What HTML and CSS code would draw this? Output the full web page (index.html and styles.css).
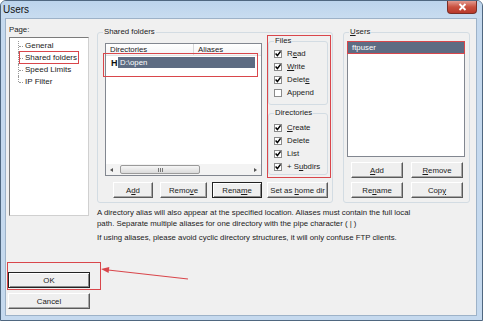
FILE: index.html
```html
<!DOCTYPE html>
<html lang="en">
<head>
    <meta charset="UTF-8">
    <title>Users</title>
    <link rel="stylesheet" href="styles.css">
</head>
<body>
    <div class="window">
        <div class="titlebar">
            <span class="title">Users</span>
            <span class="close">
                <svg width="9" height="8" viewBox="0 0 9 8"><path d="M1.5 1 L7.5 7 M7.5 1 L1.5 7" stroke="#fff" stroke-width="1.8" fill="none"/></svg>
            </span>
        </div>

        <div class="dialog">
            <!-- Page selector -->
            <div class="side">
                <div class="page-label">Page:</div>
                <ul class="tree">
                    <li>General</li>
                    <li><span class="mark">Shared folders</span></li>
                    <li>Speed Limits</li>
                    <li>IP Filter</li>
                </ul>
                <div class="side-buttons">
                    <button class="btn default">OK</button>
                    <button class="btn">Cancel</button>
                </div>
            </div>

            <div class="main">
                <div class="groups">
                    <!-- Shared folders -->
                    <div class="group shared">
                        <span class="group-title">Shared folders</span>
                        <div class="shared-body">
                            <div class="listview">
                                <div class="lv-head">
                                    <span class="col-dir">Directories</span>
                                    <span class="col-alias">Aliases</span>
                                </div>
                                <div class="lv-body">
                                    <div class="lv-row"><span class="home">H</span><span class="sel">D:\open</span></div>
                                </div>
                                <div class="hscroll">
                                    <span class="arrow left"></span>
                                    <span class="thumb"><span class="grip"></span></span>
                                    <span class="arrow right"></span>
                                </div>
                            </div>

                            <div class="perms">
                                <div class="group files">
                                    <span class="group-title">Files</span>
                                    <div class="check"><span class="box on"></span><span>R<u>e</u>ad</span></div>
                                    <div class="check"><span class="box on"></span><span><u>W</u>rite</span></div>
                                    <div class="check"><span class="box on"></span><span>Delet<u>e</u></span></div>
                                    <div class="check"><span class="box"></span><span>Append</span></div>
                                </div>
                                <div class="group dirs">
                                    <span class="group-title">Directories</span>
                                    <div class="check"><span class="box on"></span><span><u>C</u>reate</span></div>
                                    <div class="check"><span class="box on"></span><span>Delete</span></div>
                                    <div class="check"><span class="box on"></span><span>List</span></div>
                                    <div class="check"><span class="box on"></span><span>+ S<u>u</u>bdirs</span></div>
                                </div>
                            </div>

                            <div class="shared-buttons">
                                <button class="btn w-add">A<u>d</u>d</button>
                                <button class="btn w-remove">Remo<u>v</u>e</button>
                                <button class="btn default w-rename">Rena<u>m</u>e</button>
                                <button class="btn w-home">Set as <u>h</u>ome dir</button>
                            </div>
                        </div>
                    </div>

                    <!-- Users -->
                    <div class="group users">
                        <span class="group-title"><u>U</u>sers</span>
                        <div class="listbox">
                            <div class="listbox-row">ftpuser</div>
                        </div>
                        <div class="user-buttons">
                            <button class="btn"><u>A</u>dd</button>
                            <button class="btn"><u>R</u>emove</button>
                            <button class="btn">Re<u>n</u>ame</button>
                            <button class="btn">Cop<u>y</u></button>
                        </div>
                    </div>
                </div>

                <div class="notes">
                    <p>A directory alias will also appear at the specified location. Aliases must contain the full local<br>path. Separate multiple aliases for one directory with the pipe character ( | )</p>
                    <p>If using aliases, please avoid cyclic directory structures, it will only confuse FTP clients.</p>
                </div>
            </div>
        </div>

        <!-- annotations -->
        <div class="callout callout-row"></div>
        <div class="callout callout-ok"></div>
        <svg class="arrow-svg" width="100" height="30" viewBox="0 0 100 30">
            <line x1="92" y1="18" x2="12" y2="9" stroke="#d9464b" stroke-width="1.2"/>
            <polygon points="5,8 13.3,5.9 12.6,11.9" fill="#d9464b"/>
        </svg>
    </div>
</body>
</html>
```

FILE: styles.css
```css
* {
    box-sizing: border-box;
}
body {
    margin: 0;
    background: #fff;
    font-family: "Liberation Sans", Arial, sans-serif;
    font-size: 7.8px;
    color: #1b1b1b;
}
.window {
    position: relative;
    width: 483px;
    height: 321px;
    border: 1px solid #4f6780;
    border-radius: 6px 6px 0 0;
    background: #c5d9ee;
    display: flex;
    flex-direction: column;
    padding: 0 5px 4px 4px;
}
.titlebar {
    display: flex;
    justify-content: space-between;
    align-items: flex-start;
    height: 17px;
    margin: 0 -5px 0 -4px;
    padding: 0 5px 0 2px;
    background: linear-gradient(#bcd4ec, #c8dcf0);
    border-radius: 5px 5px 0 0;
}
.title {
    font-size: 10px;
    line-height: 17px;
    color: #111;
}
.close {
    width: 30px;
    height: 13px;
    display: flex;
    align-items: center;
    justify-content: center;
    background: linear-gradient(#e39a8f, #c9513f 50%, #b9392b);
    border: 1px solid #7a2e26;
    border-top: none;
    border-radius: 0 0 4px 4px;
}
.dialog {
    flex: 1;
    display: flex;
    background: #f0f0f0;
    border: 1px solid #9db2c8;
}

/* left column */
.side {
    width: 84px;
    padding: 6px 0 6px 2px;
    display: flex;
    flex-direction: column;
}
.page-label {
    line-height: 10px;
    margin-left: 1px;
}
.tree {
    list-style: none;
    margin: 2px 0 0 1px;
    padding: 2px 0 0;
    width: 80px;
    height: 179px;
    background: #fff;
    border: 1px solid;
    border-color: #7b7b7b #d0d0d0 #d0d0d0 #7b7b7b;
    font-size: 8px;
}
.tree li {
    position: relative;
    padding-left: 15px;
    line-height: 12px;
}
.tree li::before {
    content: "";
    position: absolute;
    left: 8px;
    top: 0;
    bottom: 0;
    border-left: 1px dotted #9a9a9a;
}
.tree li:first-child::before {
    top: 1px;
}
.tree li:last-child::before {
    bottom: 50%;
}
.tree li::after {
    content: "";
    position: absolute;
    left: 9px;
    top: 50%;
    width: 4px;
    border-top: 1px dotted #9a9a9a;
}
.mark {
    position: relative;
    z-index: 1;
    display: inline-block;
    line-height: 11px;
    margin-left: -5px;
    padding: 0 1px 0 5px;
    outline: 1px solid #d9464b;
}
.side-buttons {
    margin-top: auto;
    display: flex;
    flex-direction: column;
    gap: 5px;
    width: 82px;
}

/* buttons */
.btn {
    height: 16px;
    padding: 0;
    font: inherit;
    color: inherit;
    background: #efefef;
    border: 1px solid;
    border-color: #fff #5a5a5a #5a5a5a #fff;
    box-shadow: inset -1px -1px 0 #a7a7a7;
}
.btn.default {
    border-color: #222;
    box-shadow: inset 1px 1px 0 #fff, inset -1px -1px 0 #8a8a8a;
}

/* main area */
.main {
    margin-left: 7px;
    padding-top: 13px;
    display: flex;
    flex-direction: column;
}
.groups {
    display: flex;
    gap: 10px;
}
.group {
    position: relative;
    border: 1px solid #d3dce3;
    border-radius: 3px;
}
.group-title {
    position: absolute;
    top: -6px;
    left: 5px;
    padding: 0 1px;
    line-height: 10px;
    background: #f0f0f0;
}
.shared {
    width: 236px;
    height: 171px;
}
.shared-body {
    display: grid;
    grid-template-columns: 157px 62px;
    grid-template-rows: 141px 16px;
    column-gap: 6px;
    row-gap: 5px;
    padding: 3px 2px 4px 7px;
}
.listview {
    margin-top: 7px;
    height: 133px;
    border: 1px solid #828790;
    background: #fff;
    display: flex;
    flex-direction: column;
}
.lv-head {
    display: flex;
    height: 12px;
    line-height: 11px;
    border-bottom: 1px solid #e3e3e3;
    background: linear-gradient(#fff, #f3f4f6);
}
.lv-head span {
    padding-left: 4px;
}
.col-dir {
    width: 88px;
    border-right: 1px solid #d8d8d8;
}
.lv-body {
    flex: 1;
    padding-top: 1px;
}
.lv-row {
    display: flex;
    align-items: center;
    height: 11px;
    padding-left: 5px;
    margin-right: 6px;
}
.home {
    width: 7px;
    font-size: 9px;
    font-weight: bold;
    color: #111;
}
.sel {
    flex: 1;
    height: 11px;
    line-height: 11px;
    padding-left: 2px;
    background: #5e6c83;
    color: #fff;
}
.hscroll {
    height: 11px;
    display: flex;
    align-items: center;
    background: #f3f3f3;
}
.arrow {
    width: 11px;
    height: 11px;
    display: flex;
    align-items: center;
    justify-content: center;
}
.arrow::before {
    content: "";
    border: 2px solid transparent;
}
.arrow.left::before {
    border-right: 3px solid #555;
    border-left: none;
}
.arrow.right {
    margin-left: auto;
}
.arrow.right::before {
    border-left: 3px solid #555;
    border-right: none;
}
.thumb {
    margin-left: 3px;
    width: 80px;
    height: 9px;
    display: flex;
    align-items: center;
    justify-content: center;
    border: 1px solid #9a9a9a;
    border-radius: 2px;
    background: linear-gradient(#f6f6f6, #dadada);
}
.grip {
    width: 5px;
    height: 4px;
    background: repeating-linear-gradient(90deg, #777 0 1px, transparent 1px 2px);
}

/* permissions */
.perms {
    display: flex;
    flex-direction: column;
    outline: 1px solid #d9464b;
}
.files {
    margin-top: 5px;
    width: 60px;
    height: 64px;
    padding-top: 5px;
}
.dirs {
    margin-top: 8px;
    width: 60px;
    height: 62px;
    padding-top: 7px;
}
.check {
    display: flex;
    align-items: center;
    gap: 5px;
    height: 13px;
    padding-left: 5px;
    white-space: nowrap;
}
.box {
    flex: none;
    width: 8px;
    height: 8px;
    border: 1px solid #8a8a8a;
    background: #fff;
}
.box.on {
    background: #fff url("data:image/svg+xml,%3Csvg xmlns='http://www.w3.org/2000/svg' width='6' height='6' viewBox='0 0 6 6'%3E%3Cpath d='M0.6 2.6 L2.4 4.6 L5.6 0.4' stroke='%23000' stroke-width='1.5' fill='none'/%3E%3C/svg%3E") center / 6px 6px no-repeat;
}
.shared-buttons {
    grid-column: 1 / -1;
    display: flex;
    padding-left: 8px;
}
.w-add { width: 40px; margin-right: 7px; }
.w-remove { width: 47px; margin-right: 5px; }
.w-rename { width: 50px; margin-right: 5px; }
.w-home { width: 61px; }

/* users */
.users {
    width: 127px;
    height: 171px;
    padding: 8px 4px 4px 3px;
    display: flex;
    flex-direction: column;
}
.listbox {
    height: 116px;
    border: 1px solid #828790;
    background: #fff;
}
.listbox-row {
    height: 11px;
    line-height: 11px;
    padding-left: 4px;
    background: #5e6c83;
    color: #fff;
    outline: 1px solid #d9464b;
}
.user-buttons {
    margin-top: 5px;
    display: grid;
    grid-template-columns: 52px 52px;
    column-gap: 8px;
    row-gap: 4px;
    padding-left: 4px;
}

/* notes */
.notes {
    margin-top: 4px;
    line-height: 11px;
}
.notes p {
    margin: 0;
}
.notes p + p {
    margin-top: 3px;
}

/* annotations */
.callout {
    position: absolute;
    border: 1px solid #d9464b;
}
.callout-row {
    left: 102px;
    top: 52px;
    width: 155px;
    height: 24px;
}
.callout-ok {
    left: 6px;
    top: 261px;
    width: 94px;
    height: 28px;
}
.arrow-svg {
    position: absolute;
    left: 95px;
    top: 260px;
}
```
